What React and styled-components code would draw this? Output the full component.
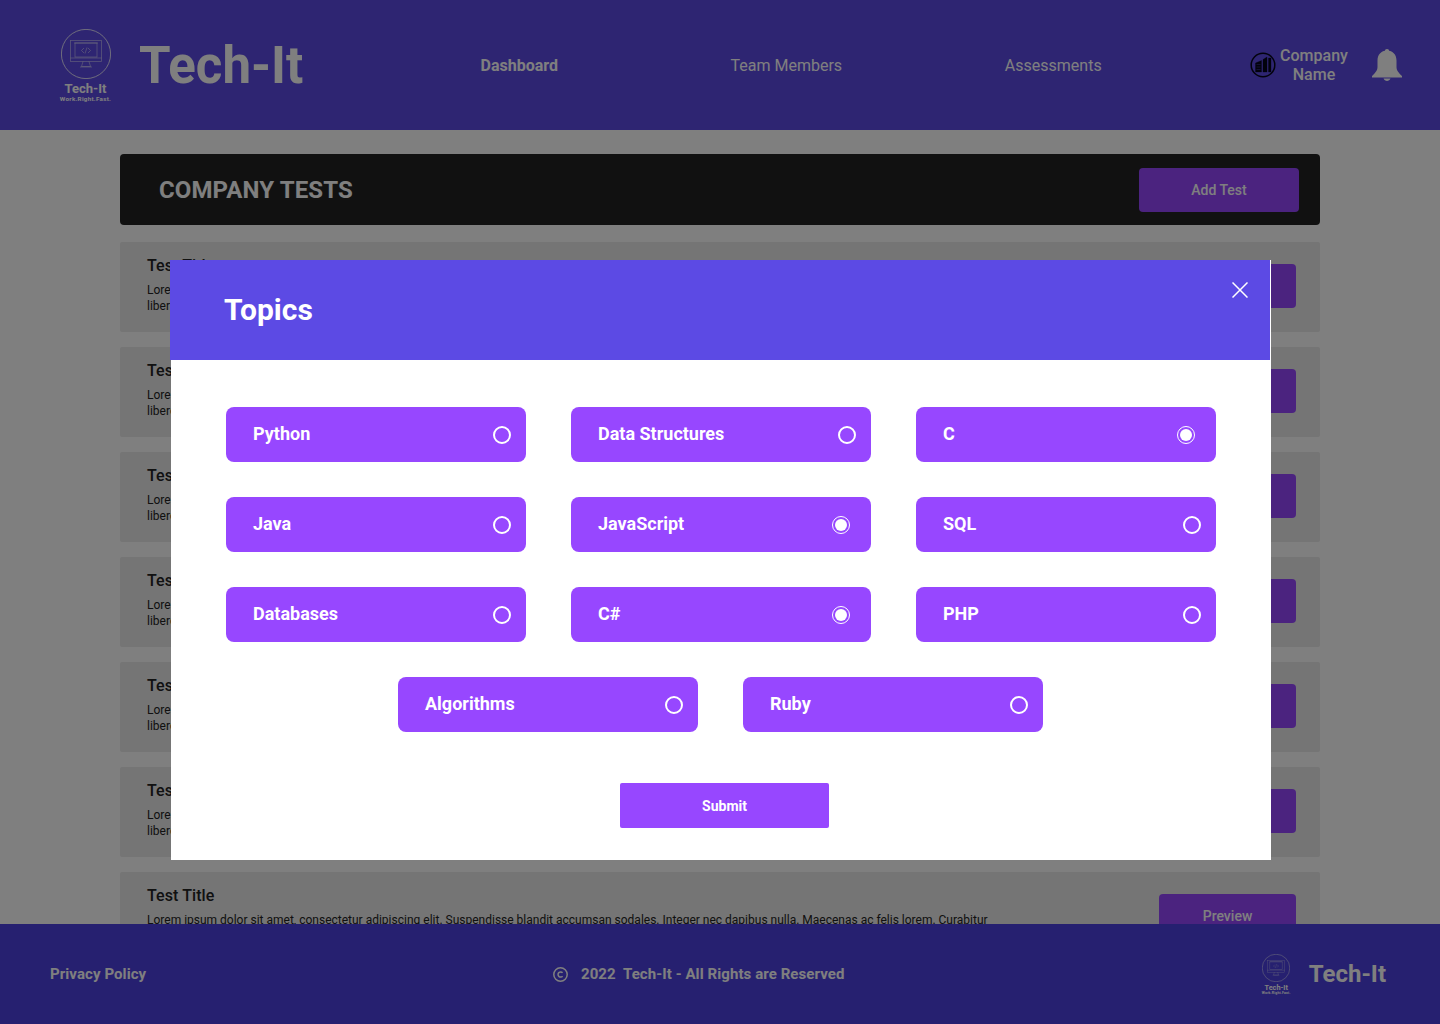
import React from "react";
import styled, { createGlobalStyle } from "styled-components";

const GlobalStyle = createGlobalStyle`
  html, body {
    margin: 0;
    padding: 0;
    background: #fff;
    font-family: Roboto, "Liberation Sans", sans-serif;
  }
  * { box-sizing: border-box; }
`;

const Page = styled.div`
  position: relative;
  width: 1440px;
  height: 1024px;
  display: flex;
  flex-direction: column;
  overflow: hidden;
  background: #fff;
`;

const Header = styled.header`
  flex: none;
  height: 130px;
  padding: 0 38px 0 59px;
  display: flex;
  align-items: center;
  background: #5c4ae4;
  color: #fff;
`;

const Brand = styled.div`
  display: flex;
  align-items: center;
  gap: ${(props) => props.gap}px;
`;

const BrandName = styled.span`
  font-size: ${(props) => props.size}px;
  font-weight: 700;
  line-height: 1;
`;

const LogoWrap = styled.div`
  width: ${(props) => props.size + 3}px;
  padding-top: ${(props) => props.size * 0.06}px;
  display: flex;
  flex-direction: column;
  align-items: center;
  color: #fff;
`;

const LogoName = styled.span`
  font-size: ${(props) => props.size * 0.26}px;
  font-weight: 700;
  line-height: ${(props) => props.size * 0.26}px;
  margin-top: ${(props) => props.size * 0.06}px;
  white-space: nowrap;
`;

const LogoTag = styled.span`
  font-size: ${(props) => props.size * 0.125}px;
  font-weight: 700;
  line-height: ${(props) => props.size * 0.18}px;
  letter-spacing: 0.045em;
  white-space: nowrap;
`;

const Nav = styled.nav`
  margin-left: 82.5px;
  display: grid;
  grid-template-columns: repeat(3, 267px);
  justify-items: center;
`;

const NavLink = styled.a`
  font-size: 16px;
  font-weight: ${(props) => (props.$active ? 700 : 400)};
  color: #fff;
`;

const Company = styled.div`
  margin-left: auto;
  display: flex;
  align-items: center;
  gap: 3px;
`;

const CompanyName = styled.span`
  width: 70px;
  font-size: 16px;
  font-weight: 500;
  line-height: 19px;
  text-align: center;
`;

const BellButton = styled.div`
  display: flex;
  margin-left: 20px;
`;

const Main = styled.main`
  flex: 1;
  min-height: 0;
  overflow: hidden;
  padding: 24px 120px 0;
  display: flex;
  flex-direction: column;
`;

const TitleBar = styled.div`
  flex: none;
  height: 71px;
  padding: 0 21px 0 39px;
  margin-bottom: 17px;
  display: flex;
  align-items: center;
  justify-content: space-between;
  background: #222;
  border-radius: 4px;
  color: #fff;
`;

const PageTitle = styled.h1`
  margin: 0;
  font-size: 24px;
  font-weight: 700;
  letter-spacing: 0.12px;
`;

const PrimaryButton = styled.button`
  width: ${(props) => props.width}px;
  height: 44px;
  border: 0;
  border-radius: 4px;
  background: #9747ff;
  color: #fff;
  font-family: inherit;
  font-size: 14px;
  font-weight: 500;
`;

const TestList = styled.div`
  display: flex;
  flex-direction: column;
  gap: 15px;
`;

const TestCard = styled.article`
  flex: none;
  height: 90px;
  padding: 14px 24px 0 27px;
  display: flex;
  justify-content: space-between;
  background: #eaeaea;
  border-radius: 2px;
`;

const TestBody = styled.div`
  width: 850px;
`;

const TestTitle = styled.h2`
  margin: 0 0 6px;
  font-size: 16px;
  font-weight: 500;
  line-height: 20px;
  letter-spacing: 0.08px;
  color: #222;
`;

const TestText = styled.p`
  margin: 0;
  font-size: 12px;
  line-height: 16px;
  color: #222;
`;

const PreviewSlot = styled.div`
  padding-top: 8px;
`;

const Footer = styled.footer`
  position: absolute;
  left: 0;
  right: 0;
  bottom: 0;
  height: 100px;
  padding: 0 54px 0 50px;
  display: grid;
  grid-template-columns: 503px 1fr auto;
  align-items: center;
  background: #4c40e0;
  color: #fff;
`;

const FooterLink = styled.a`
  font-size: 15px;
  font-weight: 700;
  letter-spacing: 0.08px;
`;

const Copyright = styled.div`
  display: flex;
  align-items: center;
  gap: 13px;
  font-size: 15px;
  font-weight: 700;
  letter-spacing: 0.08px;
  white-space: pre;
`;

const Overlay = styled.div`
  position: absolute;
  inset: 0;
  background: rgba(0, 0, 0, 0.5);
`;

const Modal = styled.section`
  position: absolute;
  left: 171px;
  top: 260px;
  width: 1100px;
  height: 600px;
  display: flex;
  flex-direction: column;
  background: #fff;
`;

const ModalHeader = styled.div`
  position: relative;
  flex: none;
  width: 1100px;
  height: 100px;
  margin-left: -1px;
  padding: 0 0 2px 54px;
  display: flex;
  align-items: center;
  background: #5c4ae4;
`;

const ModalTitle = styled.h2`
  margin: 0;
  font-size: 30px;
  font-weight: 700;
  color: #fff;
`;

const CloseButton = styled.button`
  position: absolute;
  top: 22px;
  right: 22px;
  width: 16px;
  height: 16px;
  padding: 0;
  border: 0;
  background: none;
  display: flex;
`;

const TopicGrid = styled.div`
  margin: 47px 0 0 55px;
  width: 990px;
  display: flex;
  flex-wrap: wrap;
  justify-content: center;
  gap: 35px 45px;
`;

const TopicChip = styled.div`
  width: 300px;
  height: 55px;
  padding: 0 ${(props) => (props.$checked ? 21 : 15)}px 2px 27px;
  display: flex;
  align-items: center;
  justify-content: space-between;
  background: #9747ff;
  border-radius: 8px;
  color: #fff;
  font-size: 18px;
  font-weight: 700;
  &:last-child {
    margin-right: 1px;
  }
`;

const Radio = styled.span`
  width: 18px;
  height: 18px;
  margin-top: 2px;
  border: ${(props) => (props.$checked ? 1.5 : 2)}px solid #fff;
  border-radius: 50%;
  display: flex;
  align-items: center;
  justify-content: center;
  &::after {
    content: "";
    width: 12px;
    height: 12px;
    border-radius: 50%;
    background: ${(props) => (props.$checked ? "#fff" : "transparent")};
  }
`;

const SubmitRow = styled.div`
  margin-top: 51px;
  padding-left: 449px;
`;

const SubmitButton = styled.button`
  width: 209px;
  height: 45px;
  border: 0;
  border-radius: 2px;
  background: #9747ff;
  color: #fff;
  font-family: inherit;
  font-size: 14px;
  font-weight: 700;
`;

const Logo = ({ size }) => (
  <LogoWrap size={size}>
    <svg width={size} height={size} viewBox="0 0 50 50" fill="none" stroke="#fff" strokeWidth="0.8">
      <circle cx="25" cy="25" r="24.6" />
      <g strokeOpacity="0.55">
        <rect x="9.5" y="11.5" width="31" height="21" />
        <path d="M9.5 29h31M13 14h24M22 32.5l-1.5 5h9l-1.5-5M19 38h12" />
        <rect x="14" y="14" width="22" height="14" />
        <path d="M23 19l-2.5 2.5L23 24M27 19l2.5 2.5L27 24M26 18.5l-2 6" />
      </g>
    </svg>
    <LogoName size={size}>Tech-It</LogoName>
    <LogoTag size={size}>Work.Right.Fast.</LogoTag>
  </LogoWrap>
);

const CompanyIcon = () => (
  <svg width="26" height="26" viewBox="0 0 26 26" fill="none" stroke="#05051a">
    <circle cx="13" cy="13" r="11.8" strokeWidth="1.5" />
    <path d="M5.5 11l6-2.5V20h-6zM13 7.5l4-2.5v15h-4zM18.5 6h2.5v14h-2.5z" fill="#05051a" strokeWidth="0.3" />
    <path d="M6.5 12.5h4M6.5 15h4M6.5 17.5h4" stroke="#2e2572" strokeWidth="0.9" />
  </svg>
);

const BellIcon = () => (
  <svg width="30" height="32" viewBox="0 0 30 32" fill="#fff">
    <circle cx="15" cy="2.2" r="2.2" />
    <path d="M15 1.5c-6 0-9.5 4.4-9.5 10v6.5c0 3-1.6 5.3-5.5 9v1.5h30V27c-3.9-3.7-5.5-6-5.5-9v-6.5c0-5.6-3.5-10-9.5-10z" />
    <path d="M11.5 29.5h7c-.6 1.5-2 2.5-3.5 2.5s-2.9-1-3.5-2.5z" />
  </svg>
);

const CopyrightIcon = () => (
  <svg width="15" height="15" viewBox="0 0 15 15" fill="none" stroke="#fff" strokeWidth="1.5">
    <circle cx="7.5" cy="7.5" r="6.7" />
    <path d="M9.6 5.8A2.6 2.6 0 1 0 9.6 9.2" />
  </svg>
);

const CloseIcon = () => (
  <svg width="16" height="16" viewBox="0 0 16 16" stroke="#fff" strokeWidth="1.5">
    <path d="M.5.5l15 15M15.5.5l-15 15" />
  </svg>
);

const lorem =
  "Lorem ipsum dolor sit amet, consectetur adipiscing elit. Suspendisse blandit accumsan sodales. Integer nec dapibus nulla. Maecenas ac felis lorem. Curabitur libero nisl, aliquet sed lacus non, finibus luctus odio.";

const topics = [
  { name: "Python" },
  { name: "Data Structures" },
  { name: "C", checked: true },
  { name: "Java" },
  { name: "JavaScript", checked: true },
  { name: "SQL" },
  { name: "Databases" },
  { name: "C#", checked: true },
  { name: "PHP" },
  { name: "Algorithms" },
  { name: "Ruby" },
];

const App = () => {
  return (
    <Page>
      <GlobalStyle />
      <Header>
        <Brand gap={27}>
          <Logo size={50} />
          <BrandName size={51}>Tech-It</BrandName>
        </Brand>
        <Nav>
          <NavLink $active>Dashboard</NavLink>
          <NavLink>Team Members</NavLink>
          <NavLink>Assessments</NavLink>
        </Nav>
        <Company>
          <CompanyIcon />
          <CompanyName>Company Name</CompanyName>
          <BellButton>
            <BellIcon />
          </BellButton>
        </Company>
      </Header>
      <Main>
        <TitleBar>
          <PageTitle>COMPANY TESTS</PageTitle>
          <PrimaryButton width={160}>Add Test</PrimaryButton>
        </TitleBar>
        <TestList>
          {[0, 1, 2, 3, 4, 5, 6].map((i) => (
            <TestCard key={i}>
              <TestBody>
                <TestTitle>Test Title</TestTitle>
                <TestText>{lorem}</TestText>
              </TestBody>
              <PreviewSlot>
                <PrimaryButton width={137}>Preview</PrimaryButton>
              </PreviewSlot>
            </TestCard>
          ))}
        </TestList>
      </Main>
      <Footer>
        <FooterLink>Privacy Policy</FooterLink>
        <Copyright>
          <CopyrightIcon />
          <span>2022  Tech-It - All Rights are Reserved</span>
        </Copyright>
        <Brand gap={17}>
          <Logo size={28} />
          <BrandName size={24}>Tech-It</BrandName>
        </Brand>
      </Footer>
      <Overlay />
      <Modal>
        <ModalHeader>
          <ModalTitle>Topics</ModalTitle>
          <CloseButton>
            <CloseIcon />
          </CloseButton>
        </ModalHeader>
        <TopicGrid>
          {topics.map((topic) => (
            <TopicChip key={topic.name} $checked={topic.checked}>
              {topic.name}
              <Radio $checked={topic.checked} />
            </TopicChip>
          ))}
        </TopicGrid>
        <SubmitRow>
          <SubmitButton>Submit</SubmitButton>
        </SubmitRow>
      </Modal>
    </Page>
  );
};

export default App;
